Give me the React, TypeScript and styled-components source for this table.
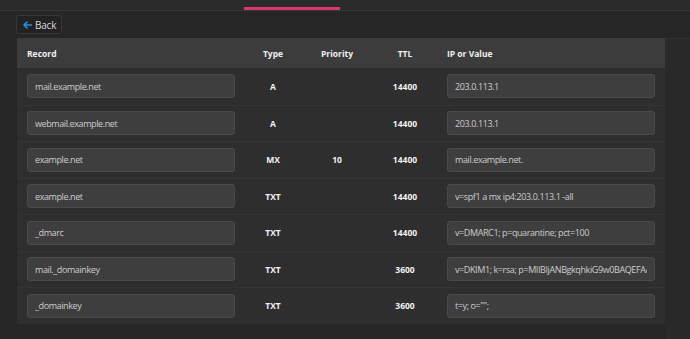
import styled, { createGlobalStyle } from "styled-components";

interface DnsRecord {
  name: string;
  type: string;
  priority?: number;
  ttl: number;
  value: string;
}

const records: DnsRecord[] = [
  { name: "mail.example.net", type: "A", ttl: 14400, value: "203.0.113.1" },
  { name: "webmail.example.net", type: "A", ttl: 14400, value: "203.0.113.1" },
  { name: "example.net", type: "MX", priority: 10, ttl: 14400, value: "mail.example.net." },
  { name: "example.net", type: "TXT", ttl: 14400, value: "v=spf1 a mx ip4:203.0.113.1 -all" },
  { name: "_dmarc", type: "TXT", ttl: 14400, value: "v=DMARC1; p=quarantine; pct=100" },
  {
    name: "mail._domainkey",
    type: "TXT",
    ttl: 3600,
    value: "v=DKIM1; k=rsa; p=MIIBIjANBgkqhkiG9w0BAQEFAAOCAQ8AMIIBCgKCAQEA",
  },
  { name: "_domainkey", type: "TXT", ttl: 3600, value: 't=y; o="";' },
];

const App: React.FC = () => {
  return (
    <>
      <GlobalStyle />
      <Page>
        <TopBar>
          <ActiveTab />
        </TopBar>
        <Toolbar>
          <BackButton>
            <svg width="9" height="8" viewBox="0 0 9 8" fill="none">
              <path
                d="M4 1 L1 4 L4 7 M1 4 H8.5"
                stroke="#2d8fe0"
                strokeWidth="1.6"
                strokeLinecap="round"
                strokeLinejoin="round"
              />
            </svg>
            Back
          </BackButton>
        </Toolbar>
        <Body>
          <Table>
            <HeadRow>
              <HeadCell>Record</HeadCell>
              <HeadCell $center>Type</HeadCell>
              <HeadCell $center>Priority</HeadCell>
              <HeadCell $center>TTL</HeadCell>
              <HeadCell>IP or Value</HeadCell>
            </HeadRow>
            {records.map((r, i) => (
              <Row key={i}>
                <FieldCell>
                  <Field readOnly value={r.name} />
                </FieldCell>
                <Cell>{r.type}</Cell>
                <Cell>{r.priority ?? ""}</Cell>
                <Cell>{r.ttl}</Cell>
                <FieldCell>
                  <Field readOnly value={r.value} />
                </FieldCell>
              </Row>
            ))}
          </Table>
          <SidePane />
        </Body>
      </Page>
    </>
  );
};

const GlobalStyle = createGlobalStyle`
  html, body {
    margin: 0;
    background: #262626;
    font-family: "Open Sans", "Liberation Sans", sans-serif;
  }
`;

const Page = styled.div`
  width: 690px;
  height: 339px;
  display: flex;
  flex-direction: column;
  background: #262626;
  overflow: hidden;
`;

const TopBar = styled.div`
  height: 10px;
  flex-shrink: 0;
  display: flex;
  align-items: flex-end;
  padding-left: 244px;
  background: #2a2a2a;
  border-bottom: 1px solid #363636;
`;

const ActiveTab = styled.div`
  width: 96px;
  height: 3px;
  background: #d9386a;
`;

const Toolbar = styled.div`
  height: 27px;
  flex-shrink: 0;
  display: flex;
  align-items: center;
  padding: 0 16px;
  box-sizing: border-box;
`;

const BackButton = styled.button`
  height: 19px;
  display: flex;
  align-items: center;
  gap: 3px;
  padding: 0 5px 0 6px;
  background: #222222;
  border: 1px solid #383838;
  border-radius: 3px;
  color: #d8d8d8;
  font-family: inherit;
  font-size: 10px;
  letter-spacing: -0.2px;
  cursor: pointer;
`;

const Body = styled.div`
  flex: 1;
  display: flex;
  align-items: flex-start;
  padding-left: 17px;
`;

const Table = styled.div`
  width: 648px;
  display: flex;
  flex-direction: column;
  background: #2e2e2e;
`;

const columns = "228px 56px 72px 64px 228px";

const HeadRow = styled.div`
  display: grid;
  grid-template-columns: ${columns};
  height: 30px;
  align-items: center;
  background: #3c3c3c;
`;

const HeadCell = styled.div<{ $center?: boolean }>`
  padding: 0 10px;
  text-align: ${(p) => (p.$center ? "center" : "left")};
  color: #f0f0f0;
  font-size: 8.5px;
  font-weight: 700;
`;

const Row = styled.div`
  display: grid;
  grid-template-columns: ${columns};
  height: 36.5px;
  align-items: center;
  box-sizing: border-box;
  & + & {
    border-top: 1px solid #343434;
  }
`;

const Cell = styled.div`
  text-align: center;
  color: #f2f2f2;
  font-size: 8.5px;
  font-weight: 700;
`;

const FieldCell = styled.div`
  padding: 0 10px;
  display: flex;
`;

const Field = styled.input`
  width: 208px;
  height: 24px;
  box-sizing: border-box;
  padding: 0 7px;
  background: #3e3e3e;
  border: 1px solid #4a4a4a;
  border-radius: 3px;
  color: #cdcdcd;
  font-family: inherit;
  font-size: 9px;
  letter-spacing: -0.4px;
  outline: none;
`;

const SidePane = styled.div`
  flex: 1;
  align-self: stretch;
  background: #292929;
  border-top: 1px solid #2f2f2f;
`;

export default App;
